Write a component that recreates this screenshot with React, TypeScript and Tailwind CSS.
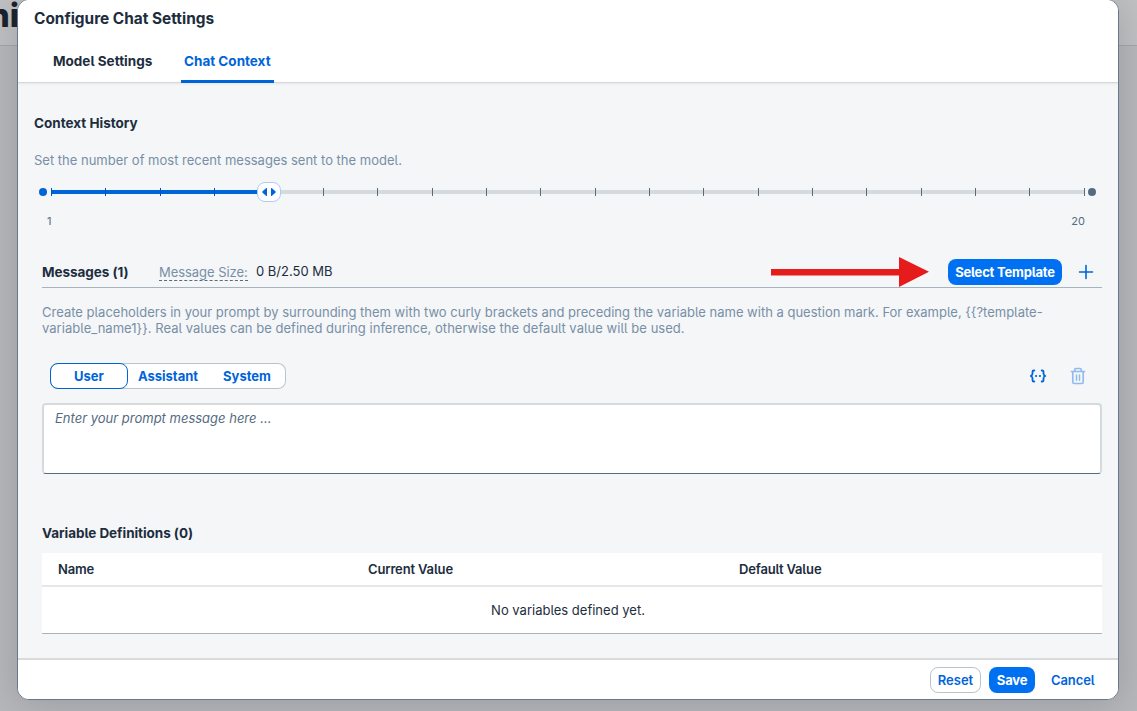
import type { ReactNode } from "react";

const TICKS = 20;
const VALUE = 5;

function Slider() {
  return (
    <div className="mt-[12px] flex h-5 items-center pl-[5px]">
      <span className="size-2 shrink-0 rounded-full bg-[#0064d9]" />
      <div className="relative ml-1 flex h-5 w-[1034px] shrink-0 items-center">
        <div className="flex h-1 w-full bg-[#d5dadd]">
          <div className="h-1 w-[218px] bg-[#0064d9]" />
        </div>
        <div className="absolute inset-0 flex items-center justify-between">
          {Array.from({ length: TICKS }, (_, i) =>
            i < VALUE ? (
              <span key={i} className="h-2 w-px bg-[#0054b8]" />
            ) : (
              <span key={i} className="h-2 w-px bg-[#556b82]" />
            ),
          )}
        </div>
        <div className="absolute left-[206px] top-0 flex h-5 w-6 items-center justify-center rounded-lg border border-[#a9cdfb] bg-white">
          <svg width="16" height="10" viewBox="0 0 16 10" fill="#0064d9">
            <path d="M6 1.6v6.8c0 .7-.6.8-1 .4L1.4 5.5a.7.7 0 0 1 0-1L5 1.2c.4-.4 1-.3 1 .4Z" />
            <path d="M10 1.6v6.8c0 .7.6.8 1 .4l3.6-3.3a.7.7 0 0 0 0-1L11 1.2c-.4-.4-1-.3-1 .4Z" />
          </svg>
        </div>
      </div>
      <span className="ml-[3px] size-2 shrink-0 rounded-full bg-[#556b82]" />
    </div>
  );
}

function PlusIcon() {
  return (
    <svg width="16" height="16" viewBox="0 0 16 16" stroke="#0064d9" strokeWidth="1.6" strokeLinecap="round">
      <path d="M8 1.5v13M1.5 8h13" />
    </svg>
  );
}

function BracesIcon() {
  return (
    <svg width="18" height="14" viewBox="0 0 18 14" fill="none" stroke="#0064d9" strokeWidth="1.8" strokeLinecap="round" strokeLinejoin="round">
      <path d="M5.3 1.5h-.5c-.8 0-1.3.5-1.3 1.3v2c0 1-.6 1.7-1.8 2.2 1.2.5 1.8 1.2 1.8 2.2v2c0 .8.5 1.3 1.3 1.3h.5" />
      <path d="M12.700 1.500h.5c.8 0 1.300.5 1.300 1.300v2c0 1 .6 1.700 1.800 2.200-1.200.5-1.800 1.200-1.800 2.200v2c0 .8-.5 1.300-1.300 1.300h-.5" />
      <path d="M7 7h.1M10.900 7h.1" strokeWidth="2.1" />
    </svg>
  );
}

function TrashIcon() {
  return (
    <svg width="16" height="18" viewBox="0 0 16 18" fill="none" stroke="#93bcee" strokeWidth="1.7" strokeLinecap="round" strokeLinejoin="round">
      <path d="M1.500 4.500h13M4.800 4.300V2.600c0-.7.400-1.100 1.100-1.100h4.200c.7 0 1.100.4 1.100 1.100v1.700" />
      <path d="M2.800 4.800v10.400c0 .8.500 1.300 1.300 1.300h7.800c.8 0 1.300-.5 1.300-1.300V4.800" />
      <path d="M6.500 8v5.200M9.500 8v5.200" strokeWidth="1.500" />
    </svg>
  );
}

function Heading({ children }: { children: ReactNode }) {
  return <h2 className="text-[13.5px] font-bold leading-5">{children}</h2>;
}

export default function App() {
  return (
    <div className="relative h-[711px] w-[1137px] overflow-hidden bg-[#b8b9bc] font-['Inter','Roboto',sans-serif] text-[13px] text-[#1d2d3e] [font-feature-settings:'cv05'_1]">
      <div className="flex h-[46px] items-start justify-end border-b border-[#a6a7a9] bg-[#c2c2c3] pr-[1118px]">
        <span className="-mt-[5px] shrink-0 text-[33px] font-extrabold leading-10 text-[#16202c]">ni</span>
      </div>

      <div className="absolute -top-px left-[17px] flex h-[701px] w-[1102px] flex-col overflow-hidden rounded-xl border border-[#67788a] bg-[#f4f6f8] shadow-[0_4px_40px_2px_rgba(60,75,85,0.26)]">
        <header className="relative z-10 flex h-[83px] shrink-0 flex-col border-b border-[#d5d7d9] bg-white shadow-[0_1px_2px_rgba(85,107,130,0.1)]">
          <h1 className="h-[38px] pl-4 text-[15.4px] font-bold leading-[37px]">Configure Chat Settings</h1>
          <nav className="-mb-px flex h-[45px] pl-[33px] text-[13.5px] font-bold">
            <div className="w-[130px] pl-[2px] pt-[3px] leading-[40px]">Model Settings</div>
            <div className="h-[45px] w-[93px] rounded-t-[2px] border-b-[3px] border-[#0064d9] pl-[3px] pt-[3px] leading-[40px] text-[#0064d9]">
              Chat Context
            </div>
          </nav>
        </header>

        <main className="flex-1 px-4">
          <div className="pt-[30px]">
            <Heading>Context History</Heading>
          </div>
          <p className="mt-[17px] leading-5 text-[#788fa6]">Set the number of most recent messages sent to the model.</p>
          <Slider />
          <div className="mt-[9px] flex justify-between pl-[13px] pr-[17px] text-[11px] leading-5 text-[#556b82]">
            <span>1</span>
            <span>20</span>
          </div>

          <section className="ml-2 w-[1060px]">
            <div className="mt-[26px] flex h-[31px] items-center border-b border-[#a8b3c0]">
              <div className="w-[117px] tracking-[-0.05px]">
                <Heading>Messages (1)</Heading>
              </div>
              <div className="-mt-[2px] flex w-[97px]">
                <span className="h-[19px] border-b border-dashed border-[#556b82] leading-5 tracking-[-0.05px] text-[#788fa6]">Message Size:</span>
              </div>
              <span className="-mt-[2px] w-[76px] whitespace-nowrap leading-5">0 B/2.50 MB</span>
              <svg className="-mt-px ml-[439px] shrink-0" width="160" height="30" viewBox="0 0 160 30" fill="#e61b1b">
                <path d="M0 12h128V0l30 14.800L128 30V18.500H0Z" />
              </svg>
              <button className="ml-auto h-[26px] w-[114px] shrink-0 rounded-lg bg-[#0070f2] text-center font-bold leading-[26px] tracking-[-0.2px] text-white">
                Select Template
              </button>
              <button className="ml-4 mr-2 shrink-0" aria-label="Add message">
                <PlusIcon />
              </button>
            </div>
            <p className="mt-4 whitespace-nowrap leading-4 text-[#788fa6]">
              Create placeholders in your prompt by surrounding them with two curly brackets and preceding the variable name with a question mark. For example, {"{{?template-"}
              <br />
              <span className="tracking-[0.03px]">{"variable_name1}}. Real values can be defined during inference, otherwise the default value will be used."}</span>
            </p>

            <div className="mt-[27px] flex h-[26px] items-center pl-2 pr-4">
              <div className="flex h-[26px] w-[236px] rounded-lg bg-white font-bold leading-6 text-[#0064d9] shadow-[inset_0_0_0_1px_#bcc3ca]">
                <button className="h-[26px] w-[78px] rounded-lg border border-[#0064d9]">User</button>
                <button className="w-[80px]">Assistant</button>
                <button className="w-[78px]">System</button>
              </div>
              <button className="ml-auto" aria-label="Insert variable">
                <BracesIcon />
              </button>
              <button className="ml-[23px]" aria-label="Delete message">
                <TrashIcon />
              </button>
            </div>

            <textarea
              className="mt-[14px] block h-[71px] w-[1060px] resize-none rounded-[4px] border-2 border-b border-[#d5dadd] border-b-[#556b82] bg-white px-[11px] py-[3px] italic leading-5 outline-none placeholder:text-[#556b82]"
              placeholder="Enter your prompt message here ..."
            />

            <div className="mt-[49px] tracking-[-0.05px]">
              <Heading>Variable Definitions (0)</Heading>
            </div>
            <div className="mt-[10px] h-[81px] w-[1060px] border-b border-[#a8b3c0] bg-white">
              <div className="grid h-[34px] grid-cols-[310px_371px_1fr] border-b-2 border-[#e5e6e8] font-semibold leading-[32px] tracking-[-0.15px]">
                <span className="pl-4">Name</span>
                <span className="pl-4">Current Value</span>
                <span className="pl-4">Default Value</span>
              </div>
              <p className="pr-[8px] text-center leading-[47px]">No variables defined yet.</p>
            </div>
          </section>
        </main>

        <footer className="flex h-[41px] shrink-0 items-center justify-end border-t-2 border-[#d8dadc] bg-white pr-6 font-semibold text-[#0064d9]">
          <button className="h-[26px] w-[51px] rounded-lg border border-[#bcc3ca] leading-6">Reset</button>
          <button className="ml-2 h-[26px] w-[46px] rounded-lg bg-[#0070f2] font-bold leading-[26px] tracking-[-0.2px] text-white">Save</button>
          <button className="ml-4 w-[43px] leading-[26px] tracking-[-0.1px]">Cancel</button>
        </footer>
      </div>
    </div>
  );
}
